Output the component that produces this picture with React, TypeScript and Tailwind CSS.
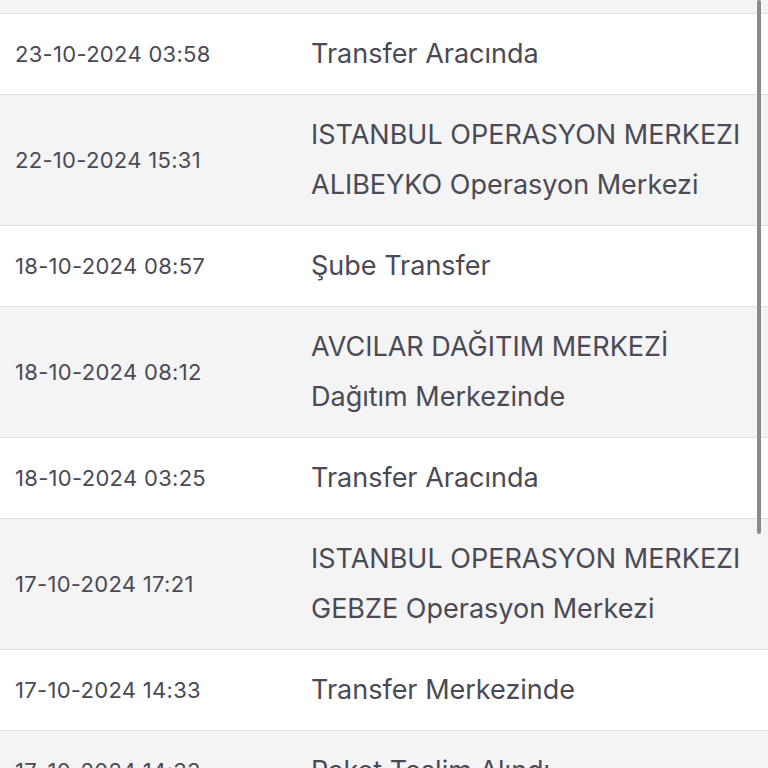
import React from 'react';

interface Movement {
    date: string;
    lines: string[];
}

const movements: Movement[] = [
    { date: '23-10-2024 03:58', lines: ['Transfer Aracında'] },
    { date: '22-10-2024 15:31', lines: ['ISTANBUL OPERASYON MERKEZI', 'ALIBEYKO Operasyon Merkezi'] },
    { date: '18-10-2024 08:57', lines: ['Şube Transfer'] },
    { date: '18-10-2024 08:12', lines: ['AVCILAR DAĞITIM MERKEZİ', 'Dağıtım Merkezinde'] },
    { date: '18-10-2024 03:25', lines: ['Transfer Aracında'] },
    { date: '17-10-2024 17:21', lines: ['ISTANBUL OPERASYON MERKEZI', 'GEBZE Operasyon Merkezi'] },
    { date: '17-10-2024 14:33', lines: ['Transfer Merkezinde'] },
    { date: '17-10-2024 14:33', lines: ['Paket Teslim Alındı'] },
];

export default function App() {
    return (
        <div className="relative h-[768px] w-[768px] overflow-hidden bg-white font-['Inter',sans-serif] text-[#4a4a56]">
            {/* previous row, cut off at the top */}
            <div className="h-[14px] border-b border-[#e0e0e0] bg-[#f4f4f4]" />

            {movements.map((m, i) => (
                <div
                    key={i}
                    className={`flex items-center border-b border-[#e0e0e0] py-[15px] ${
                        i % 2 === 0 ? 'bg-white' : 'bg-[#f4f4f4]'
                    }`}
                >
                    <div className="w-[311px] shrink-0 pl-[15px] text-[22px] tracking-[0.3px]">{m.date}</div>
                    <div className="text-[27px] leading-[50px]">
                        {m.lines.map((line, j) => (
                            <div key={j}>{line}</div>
                        ))}
                    </div>
                </div>
            ))}

            {/* scrollbar */}
            <div className="absolute right-[7px] top-0 h-[534px] w-[4px] rounded-full bg-[#8a8a8a]" />
        </div>
    );
}
